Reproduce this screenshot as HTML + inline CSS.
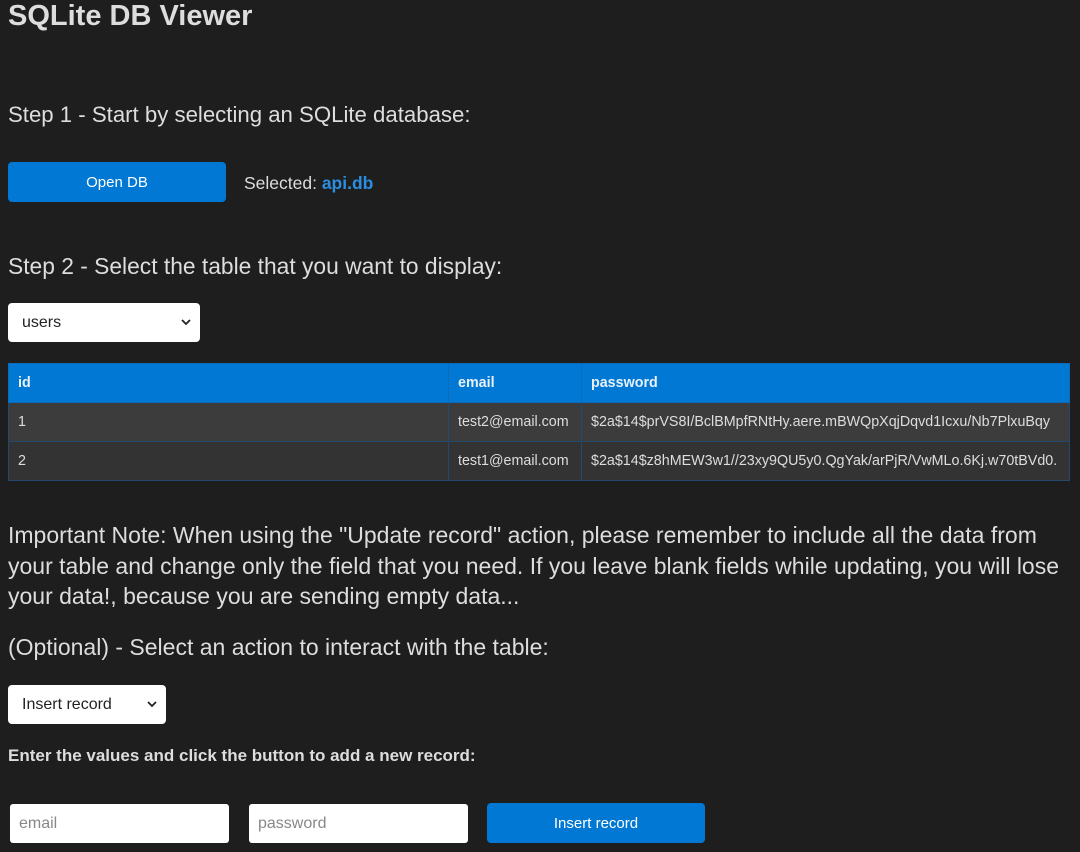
<!DOCTYPE html>
<html><head><style>
body{margin:0;background:#1e1e1e;width:1080px;height:852px;overflow:hidden;font-family:"Liberation Sans",sans-serif;color:#ddd;position:relative}
.a{position:absolute;white-space:nowrap}
.btn{position:absolute;background:#0078d4;color:#fff;border-radius:4px;font-family:"Liberation Sans",sans-serif;font-size:15px;display:flex;align-items:center;justify-content:center}
.sel{position:absolute;background:#fff;border-radius:4px;color:#222;font-family:"Liberation Sans",sans-serif;font-size:16px;box-sizing:border-box;padding-left:14px;display:flex;align-items:center}
.sel svg{position:absolute;right:9px;top:50%;margin-top:-4px}
.inp{position:absolute;background:#fff;border-radius:3px;color:#888;font-family:"Liberation Sans",sans-serif;font-size:16px;box-sizing:border-box;padding-left:9px;display:flex;align-items:center}
table{position:absolute;left:8px;top:363px;width:1062px;border-collapse:collapse;font-size:14.3px;table-layout:fixed}
td,th{border:1px solid #234a6e;padding:0 9px;height:38px;text-align:left;white-space:nowrap;overflow:hidden}
th{background:#0078d4;color:#e8f0fa;font-weight:bold;border-color:#0a6cbc}
tr.r1 td{background:#3c3c3c}tr.r2 td{background:#333}
</style></head><body>
<div class="a" style="left:8px;top:0px;font-size:29px;font-weight:bold;color:#ddd">SQLite DB Viewer</div>
<div class="a" style="left:8px;top:102px;font-size:22.2px">Step 1 - Start by selecting an SQLite database:</div>
<div class="btn" style="left:8px;top:162px;width:218px;height:40px">Open DB</div>
<div class="a" style="left:244px;top:173px;font-size:17.5px">Selected: <b style="color:#2b8ee0">api.db</b></div>
<div class="a" style="left:8px;top:253px;font-size:22.8px">Step 2 - Select the table that you want to display:</div>
<div class="sel" style="left:8px;top:303px;width:192px;height:39px">users<svg width="10" height="7" viewBox="0 0 10 7"><path d="M1 1l4 4 4-4" stroke="#222" stroke-width="1.8" fill="none"/></svg></div>
<table>
<colgroup><col style="width:440px"><col style="width:133px"><col></colgroup>
<tr><th>id</th><th>email</th><th>password</th></tr>
<tr class="r1"><td>1</td><td>test2@email.com</td><td>$2a$14$prVS8I/BclBMpfRNtHy.aere.mBWQpXqjDqvd1Icxu/Nb7PlxuBqy</td></tr>
<tr class="r2"><td>2</td><td>test1@email.com</td><td>$2a$14$z8hMEW3w1//23xy9QU5y0.QgYak/arPjR/VwMLo.6Kj.w70tBVd0.</td></tr>
</table>
<div class="a" style="left:8px;top:520px;font-size:23px;line-height:30.5px">Important Note: When using the "Update record" action, please remember to include all the data from<br>your table and change only the field that you need. If you leave blank fields while updating, you will lose<br>your data!, because you are sending empty data...</div>
<div class="a" style="left:8px;top:634px;font-size:23px">(Optional) - Select an action to interact with the table:</div>
<div class="sel" style="left:8px;top:685px;width:158px;height:39px">Insert record<svg width="10" height="7" viewBox="0 0 10 7"><path d="M1 1l4 4 4-4" stroke="#222" stroke-width="1.8" fill="none"/></svg></div>
<div class="a" style="left:8px;top:746px;font-size:17px;font-weight:bold">Enter the values and click the button to add a new record:</div>
<div class="inp" style="left:10px;top:804px;width:219px;height:39px">email</div>
<div class="inp" style="left:249px;top:804px;width:219px;height:39px">password</div>
<div class="btn" style="left:487px;top:803px;width:218px;height:40px">Insert record</div>
</body></html>
